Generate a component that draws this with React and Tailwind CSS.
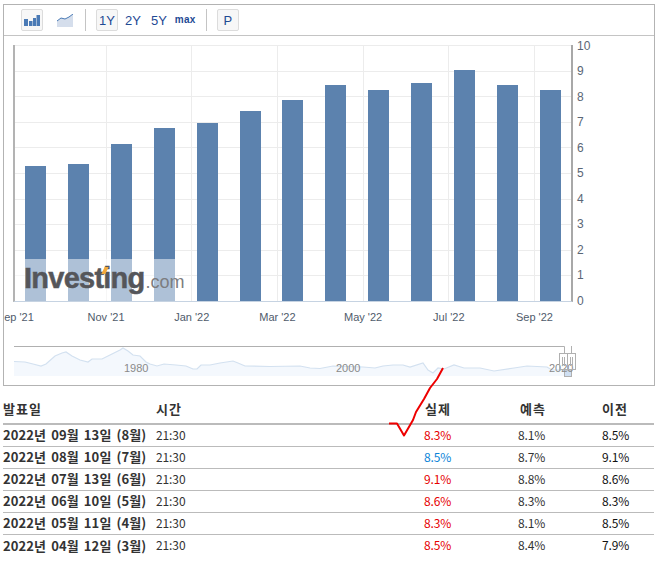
const bars = [5.3, 5.4, 6.2, 6.8, 7.0, 7.5, 7.9, 8.5, 8.3, 8.6, 9.1, 8.5, 8.3];
const yLabels = [10, 9, 8, 7, 6, 5, 4, 3, 2, 1, 0];
const xLabels = ["Sep '21", "Nov '21", "Jan '22", "Mar '22", "May '22", "Jul '22", "Sep '22"];
const rows = [
  ["2022년 09월 13일 (8월)", "8.3%", "8.1%", "8.5%", "text-[#e60000]"],
  ["2022년 08월 10일 (7월)", "8.5%", "8.7%", "9.1%", "text-[#0b84d8]"],
  ["2022년 07월 13일 (6월)", "9.1%", "8.8%", "8.6%", "text-[#e60000]"],
  ["2022년 06월 10일 (5월)", "8.6%", "8.3%", "8.3%", "text-[#e60000]"],
  ["2022년 05월 11일 (4월)", "8.3%", "8.1%", "8.5%", "text-[#e60000]"],
  ["2022년 04월 12일 (3월)", "8.5%", "8.4%", "7.9%", "text-[#e60000]"],
];
const wave =
  "14,361.5 25,362 33,364 41,366 46,364 55,356 62,353 66,352 72,356 80,360 88,362 92,359 102,359 112,354 120,350 123,348 128,351 133,355 140,356 146,362 150,364 157,366 164,364 176,365 186,366 193,369 197,369 201,365 210,365 220,363 233,361 238,363 245,366 270,366.5 300,366 310,368 320,368.5 333,366 363,367 375,368 383,366 393,365 403,365 410,367 423,363 428,370 433,373 438,368 444,369 454,365 464,368 480,368 494,371 514,368 527,366 547,367 552,370 564,370";
const wavePts = wave.split(" ").map((p) => { const [x, y] = p.split(","); return `${x - 4},${y}`; }).join(" ");
const ARIAL = "font-['Liberation_Sans',Arial,sans-serif]";

function ToolBtn({ boxed, children, className = "" }) {
  return (
    <div
      className={`flex h-[22px] items-center justify-center rounded-[2px] ${
        boxed ? "w-[22px] border border-[#dcdcdc] bg-[#f7f7f7]" : ""
      } ${className}`}
    >
      {children}
    </div>
  );
}

function Toolbar() {
  return (
    <div className={`flex h-[31px] items-center border-b border-[#c4c4c4] pl-[17px] text-[13px] leading-none text-[#1f4a94] ${ARIAL}`}>
      <ToolBtn boxed>
        <svg width="16" height="11" viewBox="0 0 16 11">
          <rect x="0" y="4" width="4" height="7" fill="#4a7ab5" />
          <rect x="5" y="6" width="3.5" height="5" fill="#4a7ab5" />
          <rect x="9" y="3" width="3" height="8" fill="#4a7ab5" />
          <rect x="12.5" y="0" width="3.5" height="11" fill="#4a7ab5" />
        </svg>
      </ToolBtn>
      <svg className="ml-[14px]" width="16" height="13" viewBox="0 0 16 13">
        <path d="M0 7 L4 4 L8 5 L12 3 L16 0 V13 H0 Z" fill="#d5deec" />
        <path d="M0 7 L4 4 L8 5 L12 3 L16 0" fill="none" stroke="#4a7ab5" />
      </svg>
      <div className="ml-[12px] h-[22px] w-px bg-[#c4c4c4]" />
      <ToolBtn boxed className="ml-[10px]">1Y</ToolBtn>
      <span className="ml-[7px]">2Y</span>
      <span className="ml-[10px]">5Y</span>
      <span className="ml-[8px] text-[10px] font-bold tracking-[0.3px]">max</span>
      <div className="ml-[10px] h-[22px] w-px bg-[#c4c4c4]" />
      <ToolBtn boxed className="ml-[10px]">P</ToolBtn>
    </div>
  );
}

function Plot() {
  return (
    <div className="ml-[9px] mt-[9px] flex">
      <div className="relative h-[257px] w-[560px] border-b border-l-2 border-r-2 border-b-[#c6d3e2] border-l-[#b3b3b3] border-r-[#a8a8a8]">
        <div className="absolute inset-0 flex flex-col">
          {yLabels.slice(0, 10).map((v) => (
            <div key={v} className="h-[25.6px] shrink-0 border-t border-[#ececec]" />
          ))}
        </div>
        <div className="absolute inset-0 flex pl-[6px]">
          {[0, 1, 2, 3, 4, 5].map((v) => (
            <div key={v} className={`h-full shrink-0 border-r border-[#ececec] ${v === 0 ? "w-[85.5px]" : "w-[85.7px]"}`} />
          ))}
        </div>
        <div className="relative flex h-full items-end gap-[21.92px] pl-[10px]">
          {bars.map((v, i) => (
            <div key={i} className="w-[21px] shrink-0 bg-[#5c82ae]" style={{ height: `${v * 25.4}px` }} />
          ))}
        </div>
        <div className="absolute bottom-0 left-0 h-[42px] w-[162px] bg-white/50" />
        <div className="absolute bottom-[3px] left-[9px] flex items-baseline whitespace-nowrap">
          <span className={`text-[29px] font-bold leading-[32px] tracking-[-0.75px] text-[#55565a] [-webkit-text-stroke:0.5px_#55565a] ${ARIAL}`}>Investing</span>
          <span className={`ml-[1px] text-[18px] leading-[32px] text-[#7c7d80] ${ARIAL}`}>.com</span>
          <span className="absolute left-[79px] top-[5px] h-[7px] w-[4px] skew-x-[-25deg] bg-[#f2a93b]" />
        </div>
      </div>
      <div className={`-mt-[12px] ml-[4px] h-[257px] text-[12px] text-[#5a6675] ${ARIAL}`}>
        {yLabels.map((v) => (
          <div key={v} className="flex h-[25.5px] items-center leading-none">{v}</div>
        ))}
      </div>
    </div>
  );
}

function Navigator() {
  return (
    <svg className="mt-[18px] block h-[38px] w-[651px]" viewBox="0 342 651 38">
      <polygon points={`10,376 ${wavePts} 560,376`} fill="#f4f8fd" />
      <polyline points={wavePts} fill="none" stroke="#d3e1f0" strokeWidth="1.2" />
      <path d="M10 346.5 H560.5 V353 M567.5 346 V353" fill="none" stroke="#b0b0b0" />
      <rect x="560.5" y="370" width="7" height="6.5" fill="#cfdff2" stroke="#b0b0b0" />
      <g fontSize="11" fill="#8a8a8a" fontFamily="'Liberation Sans', Arial, sans-serif">
        <text x="120" y="372">1980</text>
        <text x="332" y="372">2000</text>
        <text x="545" y="372">2020</text>
      </g>
      <g fill="none" stroke="#b0b0b0">
        <rect x="555.5" y="353.5" width="8" height="16" />
        <rect x="563.5" y="353.5" width="8" height="16" />
        <path d="M558.5 357 V366 M560.5 357 V366 M566.5 357 V366 M568.5 357 V366" />
      </g>
    </svg>
  );
}

function Chart() {
  return (
    <div className="h-[382px] w-[652px] overflow-hidden border border-[#b3b3b3]">
      <Toolbar />
      <Plot />
      <div className={`-ml-[26.5px] mt-[8px] flex text-[11px] leading-[14px] text-[#4f5b6b] ${ARIAL}`}>
        {xLabels.map((t, i) => (
          <div key={i} className={`w-[85.7px] shrink-0 whitespace-nowrap text-center ${i === 0 ? "-translate-x-[5px]" : ""}`}>{t}</div>
        ))}
      </div>
      <Navigator />
    </div>
  );
}

function DataTable() {
  const num = "font-normal text-[12px] tracking-[-0.1px] pb-[2px]";
  const line = (i) => (i < 5 ? "border-b border-[#bbb]" : "");
  const th = "border-b-2 border-[#bbb] pb-[3px] font-bold tracking-[1px]";
  return (
    <table className="mt-[11px] w-[651px] table-fixed border-separate border-spacing-0 font-['Noto_Sans_CJK_KR','Liberation_Sans',sans-serif] text-[#333]">
      <colgroup>
        <col className="w-[153px]" />
        <col className="w-[268px]" />
        <col className="w-[94px]" />
        <col className="w-[84px]" />
        <col className="w-[52px]" />
      </colgroup>
      <thead>
        <tr className="h-[28px] text-left text-[13px] font-bold">
          <th className={th}>발표일</th>
          <th className={th}>시간</th>
          <th className={`${th} pl-[1px]`}>실제</th>
          <th className={`${th} pl-[2px]`}>예측</th>
          <th className={th}>이전</th>
        </tr>
      </thead>
      <tbody>
        {rows.map((r, i) => (
          <tr key={i} className="h-[22px] leading-none">
            <td className={`whitespace-nowrap pb-[2px] text-[13px] font-bold tracking-[0.1px] [word-spacing:2px] ${line(i)}`}>{r[0]}</td>
            <td className={`${num} ${line(i)}`}>21:30</td>
            <td className={`${num} ${r[4]} ${line(i)}`}>{r[1]}</td>
            <td className={`${num} ${line(i)}`}>{r[2]}</td>
            <td className={`${num} text-[#111] ${line(i)}`}>{r[3]}</td>
          </tr>
        ))}
      </tbody>
    </table>
  );
}

export default function App() {
  return (
    <div className="relative h-[564px] w-[657px] overflow-hidden bg-white pl-[3px] pt-[4px]">
      <Chart />
      <DataTable />
      <svg className="absolute left-[385px] top-[365px]" width="62" height="75" viewBox="385 365 62 75">
        <polyline
          points="389,423.5 397,423.5 404,435.5 413,420 416,412 424,399 430,388 437,379 443,368"
          fill="none"
          stroke="#ee0000"
          strokeWidth="2"
          strokeLinejoin="round"
        />
      </svg>
    </div>
  );
}
